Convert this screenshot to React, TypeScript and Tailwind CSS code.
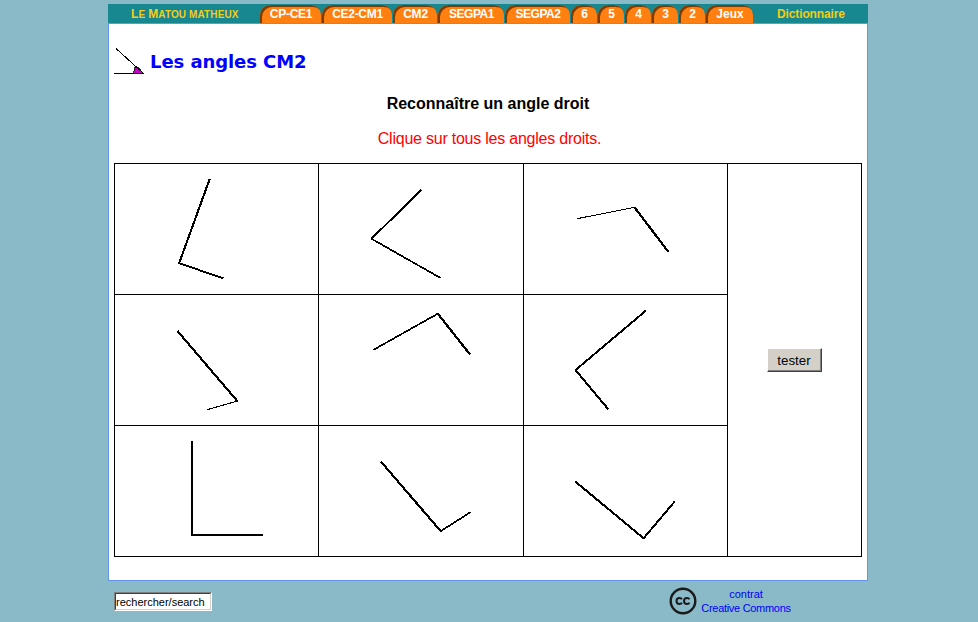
type Seg = [number, number, number, number, number];

const angles: { box: string; w: number; segs: Seg[] }[] = [
  { box: '115 164 203 130', w: 203, segs: [[209.7, 179, 179.2, 263, 2.1], [178.6, 263.1, 223.5, 278.3, 1.9]] },
  { box: '319 164 204 130', w: 204, segs: [[421.3, 190, 371.2, 239, 2], [371, 238.5, 440.5, 278, 1.7]] },
  { box: '524 164 203 130', w: 203, segs: [[577, 218.7, 635, 207.2, 1], [634.5, 207.3, 668.3, 251.8, 2.3]] },
  { box: '115 295 203 130', w: 203, segs: [[177.5, 331, 237.5, 401.3, 2.2], [207, 409.7, 237.5, 401, 1.1]] },
  { box: '319 295 204 130', w: 204, segs: [[373.5, 349.8, 438, 313.6, 1.7], [437.5, 313.3, 470.2, 354.7, 2.3]] },
  { box: '524 295 203 130', w: 203, segs: [[646.3, 310.3, 575.2, 370.3, 2], [575.2, 369.7, 608.5, 409.5, 2.1]] },
  { box: '115 426 203 130', w: 203, segs: [[192, 441, 192, 536, 2], [191, 535, 263, 535, 2]] },
  { box: '319 426 204 130', w: 204, segs: [[381, 461.7, 441, 531.5, 2.2], [440.3, 531.4, 470.5, 512.2, 1.7]] },
  { box: '524 426 203 130', w: 203, segs: [[575, 481.3, 644, 538.6, 2.1], [643.3, 538.6, 675, 501.2, 2]] },
];

const tabs: [string, string][] = [
  ['CP-CE1', 'w-[61px] tracking-[-0.25px]'],
  ['CE2-CM1', 'w-[70px] tracking-[-0.3px]'],
  ['CM2', 'w-[44px] tracking-[-0.2px]'],
  ['SEGPA1', 'w-[66px] tracking-[-0.45px]'],
  ['SEGPA2', 'w-[65px] tracking-[-0.45px]'],
  ['6', 'w-[26px]'],
  ['5', 'w-[26px]'],
  ['4', 'w-[26px]'],
  ['3', 'w-[26px]'],
  ['2', 'w-[26px]'],
  ['Jeux', 'w-[47px]'],
];

function Header() {
  return (
    <header className="flex h-[19px] bg-[#178790] text-[12px] leading-[20px] text-[#f2ce14]">
      <div className="w-[152px] pl-[23px] text-[10px] font-bold tracking-[0.12px] whitespace-nowrap">
        <span className="text-[12px]">L</span>E <span className="text-[12px]">M</span>ATOU MATHEUX
      </div>
      <nav className="flex gap-px pt-px">
        {tabs.map(([label, width]) => (
          <a
            key={label}
            className={`${width} h-[18px] rounded-t-[10px] bg-[#ff8010] pl-px text-center font-bold leading-[18px] text-white shadow-[inset_2px_2px_0_#7c3c08]`}
          >
            {label}
          </a>
        ))}
      </nav>
      <div className="ml-[24px] font-bold tracking-[-0.12px]">Dictionnaire</div>
    </header>
  );
}

export default function App() {
  return (
    <div className="h-[622px] w-[978px] overflow-hidden bg-[#8abac8] pt-[4px] pl-[108px] font-['Liberation_Sans',Arial,sans-serif]">
      <div className="w-[760px]">
        <Header />
        <main className="h-[558px] border border-[#6495ed] bg-white pt-[23px] pl-[5px]">
          <div className="flex h-[28px]">
            <svg className="mt-px h-[28px] w-[31px]" viewBox="0 0 31 28" shapeRendering="crispEdges">
              <path d="M19.5 25L21 19L24 19L29 25Z" fill="#cc00cc" stroke="#000" strokeWidth="0.8" />
              <path d="M2 0.5L29.5 25.5M0 25.5H30" stroke="#000" fill="none" />
            </svg>
            <h1 className="ml-[5px] font-['DejaVu_Sans',Verdana,sans-serif] text-[18px] leading-[29px] font-bold tracking-[-0.07px] text-[#0000ff]">
              Les angles CM2
            </h1>
          </div>
          <h2 className="mt-[20px] w-[748px] text-center text-[16px] leading-[18px] font-bold">Reconnaître un angle droit</h2>
          <p className="mt-[17px] w-[751px] text-center text-[16px] leading-[18px] tracking-[-0.23px] text-[#ff0000]">
            Clique sur tous les angles droits.
          </p>
          <div className="mt-[15px] grid h-[394px] w-[748px] grid-cols-[203px_204px_203px_133px] grid-rows-[130px_130px_130px] gap-px bg-black p-px">
            <div className="col-start-4 row-span-3 row-start-1 flex items-center justify-center bg-white">
              <button className="mr-px h-[24px] w-[55px] border border-t-white border-r-[#404040] border-b-[#404040] border-l-white bg-[#d4d0c8] pt-px text-[13.3px] leading-[20px] shadow-[inset_-1px_-1px_0_#808080]">
                tester
              </button>
            </div>
            {angles.map((a) => (
              <svg key={a.box} width={a.w} height={130} viewBox={a.box} className="bg-white" shapeRendering="crispEdges">
                {a.segs.map(([x1, y1, x2, y2, sw]) => (
                  <line key={`${x1}-${y1}`} x1={x1} y1={y1} x2={x2} y2={y2} stroke="#000" strokeWidth={sw} />
                ))}
              </svg>
            ))}
          </div>
        </main>
        <footer className="flex pl-[6px]">
          <div className="mt-[11px] h-[19px] w-[98px] border border-t-[#808080] border-r-white border-b-white border-l-[#808080]">
            <input
              className="block h-[17px] w-[96px] border border-t-[#404040] border-r-[#d4d0c8] border-b-[#d4d0c8] border-l-[#404040] bg-white text-[11px] leading-[15px]"
              defaultValue="rechercher/search"
            />
          </div>
          <svg className="mt-[6px] ml-[457px] h-[28px] w-[28px]" viewBox="0 0 28 28">
            <circle cx="14" cy="14" r="12.3" fill="none" stroke="#1a1a1a" strokeWidth="2.4" />
            <path
              d="M13 12.2Q12.3 11 10.5 11Q7.5 11 7.5 14Q7.5 17 10.5 17Q12.3 17 13 15.8M20.5 12.2Q19.8 11 18 11Q15 11 15 14Q15 17 18 17Q19.8 17 20.5 15.8"
              fill="none"
              stroke="#1a1a1a"
              strokeWidth="2"
            />
          </svg>
          <p className="mt-[6px] ml-[4px] w-[90px] text-center text-[11px] leading-[14px] whitespace-nowrap text-[#0000ff]">
            contrat
            <br />
            <span className="tracking-[-0.3px]">Creative Commons</span>
          </p>
        </footer>
      </div>
    </div>
  );
}
